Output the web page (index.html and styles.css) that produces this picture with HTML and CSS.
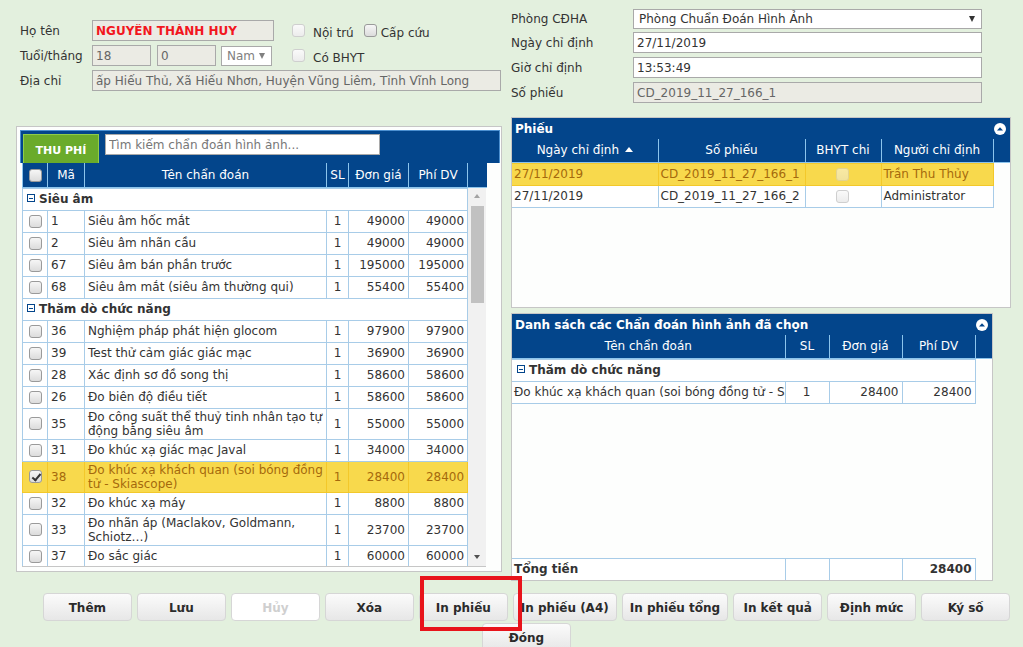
FILE: index.html
```html
<!DOCTYPE html>
<html lang="vi">
<head>
<meta charset="utf-8">
<title>Chỉ định chẩn đoán hình ảnh</title>
<link rel="stylesheet" href="styles.css">
</head>
<body>
<div class="main">
  <div class="col-left">
    <div class="patient">
      <div class="frow">
        <span class="lbl">Họ tên</span>
        <input class="inp dis name w182" value="NGUYỄN THÀNH HUY" disabled>
        <span class="cb off ml18"></span><span class="cbl">Nội trú</span>
        <span class="cb ml10"></span><span class="cbl cbl4">Cấp cứu</span>
      </div>
      <div class="frow">
        <span class="lbl">Tuổi/tháng</span>
        <input class="inp dis w59" value="18" disabled>
        <input class="inp dis w59 ml6" value="0" disabled>
        <div class="sel w51 ml5"><span class="muted">Nam</span><span class="tri gray"></span></div>
        <span class="cb off ml20"></span><span class="cbl">Có BHYT</span>
      </div>
      <div class="frow">
        <span class="lbl">Địa chỉ</span>
        <input class="inp dis w409" value="ấp Hiếu Thủ, Xã Hiếu Nhơn, Huyện Vũng Liêm, Tỉnh Vĩnh Long" disabled>
      </div>
    </div>

    <div class="lpanel">
      <div class="bar">
        <div class="tab">THU PHÍ</div>
        <input class="search" placeholder="Tìm kiếm chẩn đoán hình ảnh...">
      </div>
      <div class="grid">
        <table class="thead t-left">
          <colgroup><col class="c25"><col class="c37"><col class="c242"><col class="c22"><col class="c60"><col class="c59"><col class="c19"></colgroup>
          <tr><th><span class="cb"></span></th><th>Mã</th><th>Tên chẩn đoán</th><th>SL</th><th>Đơn giá</th><th>Phí DV</th><th></th></tr>
        </table>
        <div class="gbody">
          <table class="tbody t-lbody">
            <colgroup><col class="c25"><col class="c37"><col class="c242"><col class="c22"><col class="c60"><col class="c59"></colgroup>
            <tr class="grp"><td colspan="6"><span class="minus"></span>Siêu âm</td></tr>
            <tr><td class="ctr"><span class="cb"></span></td><td>1</td><td>Siêu âm hốc mắt</td><td class="ctr">1</td><td class="num">49000</td><td class="num">49000</td></tr>
            <tr><td class="ctr"><span class="cb"></span></td><td>2</td><td>Siêu âm nhãn cầu</td><td class="ctr">1</td><td class="num">49000</td><td class="num">49000</td></tr>
            <tr><td class="ctr"><span class="cb"></span></td><td>67</td><td>Siêu âm bán phần trước</td><td class="ctr">1</td><td class="num">195000</td><td class="num">195000</td></tr>
            <tr><td class="ctr"><span class="cb"></span></td><td>68</td><td>Siêu âm mắt (siêu âm thường qui)</td><td class="ctr">1</td><td class="num">55400</td><td class="num">55400</td></tr>
            <tr class="grp"><td colspan="6"><span class="minus"></span>Thăm dò chức năng</td></tr>
            <tr><td class="ctr"><span class="cb"></span></td><td>36</td><td>Nghiệm pháp phát hiện glocom</td><td class="ctr">1</td><td class="num">97900</td><td class="num">97900</td></tr>
            <tr><td class="ctr"><span class="cb"></span></td><td>39</td><td>Test thử cảm giác giác mạc</td><td class="ctr">1</td><td class="num">36900</td><td class="num">36900</td></tr>
            <tr><td class="ctr"><span class="cb"></span></td><td>28</td><td>Xác định sơ đồ song thị</td><td class="ctr">1</td><td class="num">58600</td><td class="num">58600</td></tr>
            <tr><td class="ctr"><span class="cb"></span></td><td>26</td><td>Đo biên độ điều tiết</td><td class="ctr">1</td><td class="num">58600</td><td class="num">58600</td></tr>
            <tr><td class="ctr"><span class="cb"></span></td><td>35</td><td>Đo công suất thể thuỷ tinh nhân tạo tự động bằng siêu âm</td><td class="ctr">1</td><td class="num">55000</td><td class="num">55000</td></tr>
            <tr><td class="ctr"><span class="cb"></span></td><td>31</td><td>Đo khúc xạ giác mạc Javal</td><td class="ctr">1</td><td class="num">34000</td><td class="num">34000</td></tr>
            <tr class="sel-row"><td class="ctr"><span class="cb on"></span></td><td>38</td><td>Đo khúc xạ khách quan (soi bóng đồng tử - Skiascope)</td><td class="ctr">1</td><td class="num">28400</td><td class="num">28400</td></tr>
            <tr><td class="ctr"><span class="cb"></span></td><td>32</td><td>Đo khúc xạ máy</td><td class="ctr">1</td><td class="num">8800</td><td class="num">8800</td></tr>
            <tr><td class="ctr"><span class="cb"></span></td><td>33</td><td>Đo nhãn áp (Maclakov, Goldmann, Schiotz…)</td><td class="ctr">1</td><td class="num">23700</td><td class="num">23700</td></tr>
            <tr><td class="ctr"><span class="cb"></span></td><td>37</td><td>Đo sắc giác</td><td class="ctr">1</td><td class="num">60000</td><td class="num">60000</td></tr>
          </table>
          <div class="vscroll">
            <div class="sarrow"><span class="stri up"></span></div>
            <div class="thumb"></div>
            <div class="sfill"></div>
            <div class="sarrow"><span class="stri down"></span></div>
          </div>
        </div>
      </div>
    </div>
  </div>

  <div class="col-right">
    <div class="order">
      <div class="rrow r1">
        <span class="rlbl">Phòng CĐHA</span>
        <div class="sel w349"><span>Phòng Chuẩn Đoán Hình Ảnh</span><span class="tri"></span></div>
      </div>
      <div class="rrow">
        <span class="rlbl">Ngày chỉ định</span>
        <input class="inp w349 dark" value="27/11/2019">
      </div>
      <div class="rrow">
        <span class="rlbl">Giờ chỉ định</span>
        <input class="inp w349 dark" value="13:53:49">
      </div>
      <div class="rrow">
        <span class="rlbl">Số phiếu</span>
        <input class="inp dis w349 r4" value="CD_2019_11_27_166_1" disabled>
      </div>
    </div>

    <div class="rpanel p1">
      <div class="ptitle"><span>Phiếu</span><svg class="coll" width="12" height="12" viewBox="0 0 12 12"><circle cx="6" cy="6" r="6" fill="#fff"/><path d="M3 7.5 L6 4.3 L9 7.5 Z" fill="#03458b"/></svg></div>
      <table class="thead t-p1">
        <colgroup><col class="c146"><col class="c147"><col class="c76"><col class="c112"><col class="c17"></colgroup>
        <tr><th>Ngày chỉ định <svg class="sort" width="8" height="5" viewBox="0 0 8 5"><path d="M0 5 L4 0 L8 5 Z" fill="#fff"/></svg></th><th>Số phiếu</th><th>BHYT chi</th><th>Người chỉ định</th><th></th></tr>
      </table>
      <table class="tbody t-p1body">
        <colgroup><col class="c146"><col class="c147"><col class="c76"><col class="c112"></colgroup>
        <tr class="sel-row"><td>27/11/2019</td><td class="clip">CD_2019_11_27_166_1</td><td class="ctr"><span class="cb off faint"></span></td><td>Trần Thu Thủy</td></tr>
        <tr><td>27/11/2019</td><td class="clip">CD_2019_11_27_166_2</td><td class="ctr"><span class="cb off"></span></td><td>Administrator</td></tr>
      </table>
    </div>

    <div class="rpanel p2">
      <div class="ptitle"><span>Danh sách các Chẩn đoán hình ảnh đã chọn</span><svg class="coll" width="12" height="12" viewBox="0 0 12 12"><circle cx="6" cy="6" r="6" fill="#fff"/><path d="M3 7.5 L6 4.3 L9 7.5 Z" fill="#03458b"/></svg></div>
      <table class="thead t-p2">
        <colgroup><col class="c273"><col class="c44"><col class="c73"><col class="c73"><col class="c17"></colgroup>
        <tr><th>Tên chẩn đoán</th><th>SL</th><th>Đơn giá</th><th>Phí DV</th><th></th></tr>
      </table>
      <div class="p2body">
        <table class="tbody t-p2body">
          <colgroup><col class="c273"><col class="c44"><col class="c73"><col class="c73"></colgroup>
          <tr class="grp g2"><td colspan="4"><span class="minus"></span>Thăm dò chức năng</td></tr>
          <tr><td class="clip">Đo khúc xạ khách quan (soi bóng đồng tử - Skiascope)</td><td class="ctr">1</td><td class="num">28400</td><td class="num">28400</td></tr>
        </table>
      </div>
      <table class="tbody t-p2body total">
        <colgroup><col class="c273"><col class="c44"><col class="c73"><col class="c73"></colgroup>
        <tr><td>Tổng tiền</td><td></td><td></td><td class="num">28400</td></tr>
      </table>
    </div>
  </div>
</div>

<div class="btnbar">
  <button class="btn">Thêm</button>
  <button class="btn">Lưu</button>
  <button class="btn disabled">Hủy</button>
  <button class="btn">Xóa</button>
  <button class="btn">In phiếu</button>
  <button class="btn">In phiếu (A4)</button>
  <button class="btn">In phiếu tổng</button>
  <button class="btn">In kết quả</button>
  <button class="btn">Định mức</button>
  <button class="btn">Ký số</button>
  <button class="btn">Đóng</button>
</div>

<div class="mark"></div>
</body>
</html>
```

FILE: styles.css
```css
* { box-sizing: border-box; }
html, body { margin: 0; padding: 0; }
body {
  background: #e3f0de;
  font-family: "DejaVu Sans", Verdana, sans-serif;
  font-size: 12px;
  color: #333;
  width: 1023px;
  height: 647px;
  overflow: hidden;
  position: relative;
}

.main { display: flex; align-items: flex-start; padding-left: 16px; }
.col-left { width: 486px; flex: none; }
.col-right { width: 500px; margin-left: 9px; flex: none; }

/* patient form */
.patient { height: 126px; padding: 20px 0 0 4px; }
.frow { display: flex; align-items: center; height: 21px; margin-bottom: 4px; }
.lbl { width: 72px; flex: none; }
.inp {
  height: 21px;
  border: 1px solid #a9a9a9;
  background: #fff;
  font-family: inherit;
  font-size: 12px;
  color: #555;
  padding: 0 3px;
  margin: 0;
  outline: none;
  flex: none;
}
.inp.dis { background: #ebebe4; color: #666; }
.inp.dark { color: #333; }
.inp.name { color: #f2161e; font-weight: bold; -webkit-text-fill-color: #f2161e; }
.inp:disabled { opacity: 1; }
.w182 { width: 182px; }
.w59 { width: 59px; }
.w51 { width: 51px; }
.w409 { width: 409px; }
.w349 { width: 349px; }
.ml5 { margin-left: 5px; }
.ml6 { margin-left: 6px; }
.ml10 { margin-left: 10px; }
.ml18 { margin-left: 18px; }
.ml20 { margin-left: 20px; }

.sel {
  height: 20px;
  border: 1px solid #a9a9a9;
  background: #fff;
  display: flex;
  align-items: center;
  justify-content: space-between;
  padding: 0 6px 0 5px;
  flex: none;
}
.muted { color: #808080; }
.tri {
  width: 0; height: 0;
  border-left: 3.5px solid transparent;
  border-right: 3.5px solid transparent;
  border-top: 6px solid #333;
}
.tri.gray { border-top-color: #808080; }

.cb {
  display: inline-block;
  width: 13px; height: 13px;
  border: 1px solid #9a9a9a;
  border-radius: 3px;
  background: linear-gradient(#f6f6f6, #dcdcdc);
  vertical-align: middle;
  position: relative;
  flex: none;
}
.cb.off { border-color: #cfcfcf; background: linear-gradient(#fafafa, #ececec); }
.cb.faint { opacity: 0.5; }
.cb.on::after {
  content: "";
  position: absolute;
  left: 4px; top: 1px;
  width: 3px; height: 7px;
  border: solid #333;
  border-width: 0 2px 2px 0;
  transform: rotate(40deg);
}
.cbl { margin-left: 8px; padding-top: 4px; }
.cbl4 { margin-left: 4px; }

/* right form */
.order { height: 117px; padding-top: 9px; }
.rrow { display: flex; align-items: center; margin-bottom: 4px; }
.rrow.r1 { margin-bottom: 3px; }
.rlbl { width: 122px; flex: none; }

/* left panel */
.lpanel {
  height: 446px;
  border: 1px solid #c6c6c6;
  background: #fdfefd;
  padding: 3px 1px 0 3px;
}
.bar {
  height: 33px;
  background: #03458b;
  border: 1px solid #4b8fd0;
  border-bottom: none;
  display: flex;
  align-items: flex-start;
  padding: 3px 0 0 2px;
}
.tab {
  width: 76px; height: 29px;
  background: #6aab2b;
  border: 1px solid #8fcd4a;
  border-bottom: none;
  color: #fff;
  font-size: 11px;
  font-weight: bold;
  display: flex;
  align-items: center;
  justify-content: center;
  padding-top: 2px;
}
.search {
  margin-left: 6px;
  width: 275px; height: 21px;
  border: 1px solid #a9a9a9;
  background: #fff;
  font-family: inherit;
  font-size: 12px;
  padding: 0 3px;
  outline: none;
}
.search::placeholder { color: #777; }
.grid { margin-left: 2px; }

table { border-collapse: collapse; table-layout: fixed; }
.c25 { width: 25px; } .c37 { width: 37px; } .c242 { width: 242px; } .c22 { width: 22px; }
.c60 { width: 60px; } .c59 { width: 59px; } .c19 { width: 19px; }
.c146 { width: 146px; } .c147 { width: 147px; } .c76 { width: 76px; } .c112 { width: 112px; } .c17 { width: 17px; }
.c273 { width: 273px; } .c44 { width: 44px; } .c73 { width: 73px; }

.thead th {
  background: #03458b;
  color: #fff;
  font-weight: normal;
  border: 1px solid #8cc4ec;
  border-top: none;
  padding: 0 2px;
  white-space: nowrap;
  overflow: hidden;
}
.thead th:first-child { border-left: none; }
.thead th:last-child { border-right: none; }
.t-left { width: 464px; }
.t-left tr { height: 24px; }
.t-left th:first-child { border-left: 1px solid #8cc4ec; }

.tbody td {
  border: 1px solid #a8cce8;
  padding: 1px 3px;
  line-height: 14px;
  vertical-align: middle;
  background: #fff;
}
.tbody tr { height: 22px; }
.ctr { text-align: center; }
.num { text-align: right; }
.clip { white-space: nowrap; overflow: hidden; text-overflow: clip; }
.tbody .ctr .cb { display: block; margin: 0 auto; }

.grp td { font-weight: bold; padding-left: 4px; }
.minus {
  display: inline-block;
  width: 8px; height: 8px;
  border: 1px solid #03458b;
  position: relative;
  margin-right: 4px;
  vertical-align: 1px;
}
.minus::after {
  content: "";
  position: absolute;
  left: 1px; top: 2.5px;
  width: 4px; height: 1px;
  background: #03458b;
}

.sel-row td { background: #f8d94c; color: #a5690c; border-color: #f3c82a; }

.gbody { display: flex; height: 379px; overflow: hidden; border-bottom: 1px solid #c6c6c6; width: 464px; }
.t-lbody { width: 445px; align-self: flex-start; }
.vscroll {
  width: 19px; flex: none;
  background: #f1f1f1;
  border-right: 1px solid #c6c6c6;
  display: flex;
  flex-direction: column;
  align-items: center;
}
.sarrow { height: 17px; width: 100%; display: flex; align-items: center; justify-content: center; }
.stri { width: 0; height: 0; border-left: 3.5px solid transparent; border-right: 3.5px solid transparent; }
.stri.up { border-bottom: 4px solid #a3a3a3; }
.stri.down { border-top: 4px solid #505050; }
.thumb { width: 13px; height: 97px; background: #c1c1c1; margin-top: 1px; }
.sfill { flex: 1; }

/* right panels */
.rpanel { border: 1px solid #c6c6c6; background: #fdfefd; display: flex; flex-direction: column; }
.p1 { width: 500px; height: 191px; }
.p2 { width: 482px; height: 268px; margin-top: 5px; }
.ptitle {
  height: 21px;
  background: #03458b;
  color: #fff;
  font-weight: bold;
  display: flex;
  align-items: center;
  justify-content: space-between;
  padding: 1px 4px 0 3px;
  flex: none;
}
.coll { display: block; }
.t-p1 { width: 498px; }
.t-p1 tr, .t-p2 tr { height: 23px; }
.sort { vertical-align: 2px; margin-left: 2px; }
.t-p1body { width: 481px; }
.t-p1body td { padding-left: 2px; }
.t-p1body td:first-child, .t-p2body td:first-child { border-left: none; }
.t-p2 { width: 480px; }
.p2body { flex: 1; overflow: hidden; }
.t-p2body { width: 463px; }
.t-p2body td { padding-left: 2px; }
.g2 td { padding-left: 5px; }
.total td { font-weight: bold; border-bottom: none; }

/* buttons */
.btnbar {
  display: flex;
  flex-wrap: wrap;
  justify-content: center;
  column-gap: 5px;
  row-gap: 2px;
  width: 993px;
  margin: 12px 0 0 30px;
}
.btn {
  min-width: 89px;
  height: 28px;
  padding: 2px 7px 0;
  border: 1px solid #d6d6d6;
  border-radius: 4px;
  background: linear-gradient(#fbfbfb, #e7e7e7);
  font-family: inherit;
  font-size: 12px;
  font-weight: bold;
  color: #2b2b2b;
}
.btn.disabled { background: #fff; color: #cfcfcf; }

.mark {
  position: absolute;
  left: 420px; top: 576px;
  width: 102px; height: 55px;
  border: 4px solid #e8141b;
  pointer-events: none;
}
```
